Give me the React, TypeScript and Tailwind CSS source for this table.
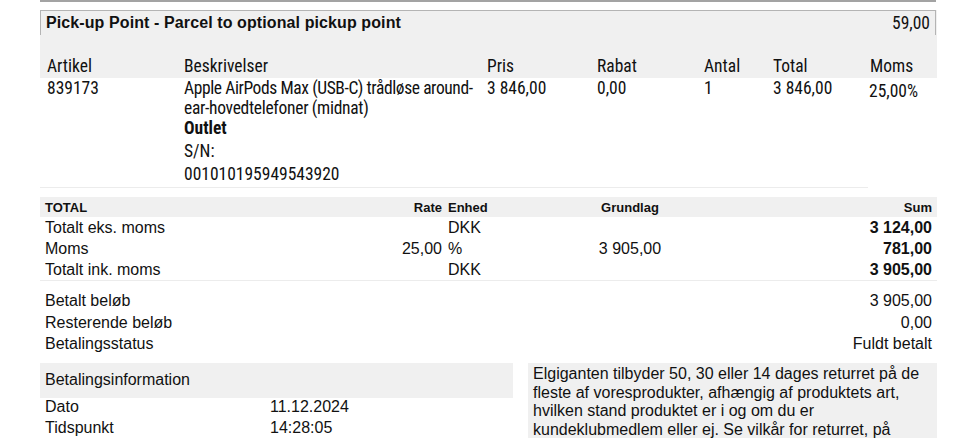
import React from "react";

const narrow = { fontFamily: '"Liberation Sans Narrow", "Roboto Condensed", Roboto, sans-serif' };

export default function App() {
  return (
    <div className="w-[960px] h-[438px] overflow-hidden bg-white text-[#111]" style={{ fontFamily: '"Liberation Sans", Arial, sans-serif' }}>
      <div className="ml-[40px] w-[897px]">
        <div className="h-[2px] bg-[#a3a3a3] w-[896px]" />
        <div className="mt-[8px] bg-[#f0f0f0]">
          <div className="h-[25px] border-t border-l border-r border-[#b4b4b4] w-[896px] flex items-center justify-between pl-[5px] pr-[5px]">
            <span className="text-[16px] font-bold leading-[24px] tracking-[0.1px]">Pick-up Point - Parcel to optional pickup point</span>
            <span className="text-[17.5px] leading-[24px]" style={narrow}>59,00</span>
          </div>
          <div className="pt-[21px] pb-[2px] pl-[7px] grid grid-cols-[137px_303px_110px_107px_69px_97px_1fr] text-[17.5px] leading-[20px]" style={narrow}>
            <span>Artikel</span>
            <span>Beskrivelser</span>
            <span>Pris</span>
            <span>Rabat</span>
            <span>Antal</span>
            <span>Total</span>
            <span>Moms</span>
          </div>
        </div>
        <div className="w-[828px] border-b border-[#ececec] pb-[3px] pl-[7px] grid grid-cols-[137px_303px_110px_107px_69px_97px_1fr] text-[17.5px] leading-[20px]" style={narrow}>
          <span>839173</span>
          <div className="whitespace-nowrap">
            <div className="tracking-[-0.4px]">Apple AirPods Max (USB-C) trådløse around-</div>
            <div className="tracking-[-0.3px]">ear-hovedtelefoner (midnat)</div>
            <div className="font-bold">Outlet</div>
            <div className="mt-[3px]">S/N:</div>
            <div className="mt-[3px]">001010195949543920</div>
          </div>
          <span>3 846,00</span>
          <span>0,00</span>
          <span>1</span>
          <span>3 846,00</span>
          <span className="whitespace-nowrap pt-[3px] -ml-[1px]">25,00%</span>
        </div>

        <div className="mt-[9px] h-[20px] bg-[#f0f0f0] grid grid-cols-[270px_127px_6px_120px_1fr] items-center text-[13px] font-bold pl-[5px] pr-[5px] pt-[1px]">
          <span>TOTAL</span>
          <span className="text-right">Rate</span>
          <span />
          <span>Enhed</span>
          <div className="grid grid-cols-[124px_1fr]">
            <span className="text-center">Grundlag</span>
            <span className="text-right">Sum</span>
          </div>
        </div>
        <div className="border-b border-[#ececec] text-[16px] leading-[21px] pl-[5px] pr-[5px]">
          {[
            ["Totalt eks. moms", "", "DKK", "", "3 124,00"],
            ["Moms", "25,00", "%", "3 905,00", "781,00"],
            ["Totalt ink. moms", "", "DKK", "", "3 905,00"],
          ].map((r, i) => (
            <div key={i} className="grid grid-cols-[270px_127px_6px_120px_1fr]">
              <span>{r[0]}</span>
              <span className="text-right">{r[1]}</span>
              <span />
              <span>{r[2]}</span>
              <div className="grid grid-cols-[124px_1fr]">
                <span className="text-center">{r[3]}</span>
                <span className="text-right font-bold">{r[4]}</span>
              </div>
            </div>
          ))}
        </div>

        <div className="pt-[9px] text-[16px] leading-[21.5px] pl-[5px] pr-[5px]">
          {[
            ["Betalt beløb", "3 905,00"],
            ["Resterende beløb", "0,00"],
            ["Betalingsstatus", "Fuldt betalt"],
          ].map((r, i) => (
            <div key={i} className="flex justify-between">
              <span>{r[0]}</span>
              <span>{r[1]}</span>
            </div>
          ))}
        </div>

        <div className="mt-[8px] flex items-start">
          <div className="w-[473px]">
            <div className="h-[35px] bg-[#f0f0f0] flex items-center pl-[5px] text-[16px]">Betalingsinformation</div>
            <div className="text-[16px] leading-[21px] pl-[5px] -mt-[1.5px]">
              <div className="flex"><span className="w-[225px]">Dato</span><span>11.12.2024</span></div>
              <div className="flex"><span className="w-[225px]">Tidspunkt</span><span>14:28:05</span></div>
            </div>
          </div>
          <div className="ml-[15px] flex-1 bg-[#f0f0f0] pl-[5px] pr-[4px] pt-[2.5px] text-[16px] leading-[18.7px]">
            Elgiganten tilbyder 50, 30 eller 14 dages returret på de fleste af voresprodukter, afhængig af produktets art, hvilken stand produktet er i og om du er kundeklubmedlem eller ej. Se vilkår for returret, på
          </div>
        </div>
      </div>
    </div>
  );
}
